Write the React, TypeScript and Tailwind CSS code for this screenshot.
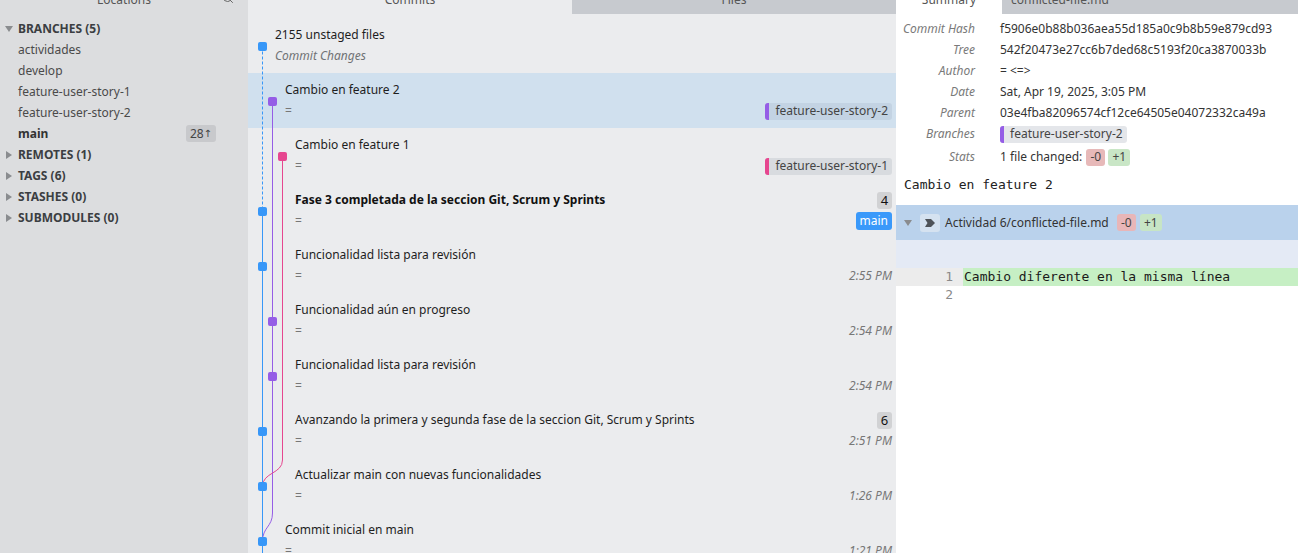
import { Search } from "lucide-react";

const BLUE = "#3797f8";
const PURPLE = "#955de6";
const PINK = "#e6468f";

type Commit = {
  title: string;
  sub?: string;
  italicSub?: boolean;
  pl: string;
  selected?: boolean;
  bold?: boolean;
  badge?: string;
  tag?: { name: string; color: string };
  main?: boolean;
  time?: string;
  first?: boolean;
};

const commits: Commit[] = [
  { title: "2155 unstaged files", sub: "Commit Changes", italicSub: true, pl: "pl-[27px]", first: true },
  { title: "Cambio en feature 2", pl: "pl-[37px]", selected: true, tag: { name: "feature-user-story-2", color: PURPLE } },
  { title: "Cambio en feature 1", pl: "pl-[47px]", tag: { name: "feature-user-story-1", color: PINK } },
  { title: "Fase 3 completada de la seccion Git, Scrum y Sprints", pl: "pl-[47px]", bold: true, badge: "4", main: true },
  { title: "Funcionalidad lista para revisión", pl: "pl-[47px]", time: "2:55 PM" },
  { title: "Funcionalidad aún en progreso", pl: "pl-[47px]", time: "2:54 PM" },
  { title: "Funcionalidad lista para revisión", pl: "pl-[47px]", time: "2:54 PM" },
  { title: "Avanzando la primera y segunda fase de la seccion Git, Scrum y Sprints", pl: "pl-[47px]", badge: "6", time: "2:51 PM" },
  { title: "Actualizar main con nuevas funcionalidades", pl: "pl-[47px]", time: "1:26 PM" },
  { title: "Commit inicial en main", pl: "pl-[37px]", time: "1:21 PM" },
];

const nodes = [
  { x: 14.5, c: BLUE },
  { x: 24.5, c: PURPLE },
  { x: 34.5, c: PINK },
  { x: 14.5, c: BLUE },
  { x: 14.5, c: BLUE },
  { x: 24.5, c: PURPLE },
  { x: 24.5, c: PURPLE },
  { x: 14.5, c: BLUE },
  { x: 14.5, c: BLUE },
  { x: 14.5, c: BLUE },
];

const details = [
  { label: "Commit Hash", value: "f5906e0b88b036aea55d185a0c9b8b59e879cd93" },
  { label: "Tree", value: "542f20473e27cc6b7ded68c5193f20ca3870033b" },
  { label: "Author", value: "= <=>" },
  { label: "Date", value: "Sat, Apr 19, 2025, 3:05 PM" },
  { label: "Parent", value: "03e4fba82096574cf12ce64505e04072332ca49a" },
];

function Caret({ open }: { open?: boolean }) {
  return open ? (
    <svg width="8" height="6" viewBox="0 0 8 6" className="shrink-0">
      <path d="M0 0 H8 L4 6 Z" fill="#8a8c8f" />
    </svg>
  ) : (
    <svg width="6" height="8" viewBox="0 0 6 8" className="shrink-0">
      <path d="M0 0 L6 4 L0 8 Z" fill="#8a8c8f" />
    </svg>
  );
}

function Tag({ name, color, bg }: { name: string; color: string; bg: string }) {
  return (
    <span className={`flex h-[17px] items-center overflow-hidden rounded-[3px] ${bg}`}>
      <span className="h-full w-[4px]" style={{ backgroundColor: color }} />
      <span className="pl-[6px] pr-[4px] text-[12px] leading-none text-[#444]">{name}</span>
    </span>
  );
}

function Graph() {
  return (
    <svg className="pointer-events-none absolute left-0 top-0" width="48" height="545">
      <line x1="14.5" y1="32.5" x2="14.5" y2="197.5" stroke={BLUE} strokeWidth="1" strokeDasharray="3 2" />
      <line x1="14.5" y1="197.5" x2="14.5" y2="545" stroke={BLUE} strokeWidth="1" />
      <path d="M24.5 87.5 V499 C24.5 513, 14.5 513, 14.5 527.5" stroke={PURPLE} strokeWidth="1" fill="none" />
      <path d="M34.5 142.5 V446 C34.5 460, 14.5 458, 14.5 472.5" stroke={PINK} strokeWidth="1" fill="none" />
      {nodes.map((n, i) => (
        <rect key={i} x={n.x - 4.5} y={28 + i * 55} width="9" height="9" rx="2" fill={n.c} />
      ))}
    </svg>
  );
}

export default function App() {
  return (
    <div className="flex h-[553px] w-[1298px] overflow-hidden font-['Noto_Sans',sans-serif] text-[12px] text-[#222]">
      {/* Sidebar */}
      <aside className="flex w-[248px] shrink-0 flex-col bg-[#dcdddf]">
        <div className="relative flex h-[14px] shrink-0 justify-center overflow-hidden">
          <span className="-mt-[10px] leading-[20px] text-[#555]">Locations</span>
          <Search className="absolute right-[14px] -top-[8px]" size={12} strokeWidth={2} color="#666" />
        </div>
        <div className="pt-[4px]">
          <div className="flex h-[21px] items-center gap-[5px] pl-[5px] font-bold text-[#3b3e42]">
            <Caret open />
            <span>BRANCHES (5)</span>
          </div>
          {["actividades", "develop", "feature-user-story-1", "feature-user-story-2"].map((b) => (
            <div key={b} className="flex h-[21px] items-center pl-[18px] text-[#4a4a4a]">
              {b}
            </div>
          ))}
          <div className="flex h-[21px] items-center justify-between pl-[18px] pr-[32px]">
            <span className="font-bold text-[#333]">main</span>
            <span className="flex h-[17px] items-center rounded-[3px] bg-[#c8c9cc] px-[4px] text-[12px] text-[#444]">
              28<span className="font-['DejaVu_Sans',sans-serif] text-[10px]">↑</span>
            </span>
          </div>
          {["REMOTES (1)", "TAGS (6)", "STASHES (0)", "SUBMODULES (0)"].map((h) => (
            <div key={h} className="flex h-[21px] items-center gap-[6px] pl-[6px] font-bold text-[#3b3e42]">
              <Caret />
              <span>{h}</span>
            </div>
          ))}
        </div>
      </aside>

      {/* Commits */}
      <main className="flex w-[648px] shrink-0 flex-col bg-[#ebecee]">
        <div className="flex h-[14px] shrink-0 overflow-hidden">
          <div className="flex w-[324px] justify-center">
            <span className="-mt-[10px] leading-[20px] text-[#555]">Commits</span>
          </div>
          <div className="flex flex-1 justify-center bg-[#c7cacf]">
            <span className="-mt-[10px] leading-[20px] text-[#555]">Files</span>
          </div>
        </div>
        <div className="relative min-h-0 flex-1 overflow-hidden">
          {commits.map((c, i) => (
            <div
              key={i}
              className={`${c.first ? "h-[59px] pt-[12px]" : "h-[55px] pt-[8px]"} ${c.pl} pr-[4px] ${
                c.selected ? "bg-[#d0e0ee]" : ""
              }`}
            >
              <div className="flex h-[18px] items-center justify-between leading-[18px]">
                <span className={c.bold ? "font-bold text-[#111]" : "text-[#1e1e1e]"}>{c.title}</span>
                {c.badge && (
                  <span className="flex h-[17px] w-[15px] items-center justify-center rounded-[3px] bg-[#d1d2d4] text-[13px] text-[#111]">
                    {c.badge}
                  </span>
                )}
              </div>
              <div className="mt-[3px] flex h-[18px] items-center justify-between leading-[18px]">
                <span className={c.italicSub ? "italic text-[#6f7275]" : "text-[#777]"}>
                  {c.sub ?? "="}
                </span>
                {c.tag && (
                  <Tag name={c.tag.name} color={c.tag.color} bg={c.selected ? "bg-[#c3d3e3]" : "bg-[#d8dbdf]"} />
                )}
                {c.main && (
                  <span className="flex h-[18px] items-center rounded-[3px] bg-[#3a99fa] px-[4px] text-[12px] text-white">
                    main
                  </span>
                )}
                {c.time && <span className="italic text-[#777]">{c.time}</span>}
              </div>
            </div>
          ))}
          <Graph />
        </div>
      </main>

      {/* Details */}
      <section className="flex flex-1 flex-col bg-white">
        <div className="flex h-[14px] shrink-0 overflow-hidden">
          <div className="flex w-[106px] justify-center">
            <span className="-mt-[10px] leading-[20px] text-[#555]">Summary</span>
          </div>
          <div className="flex flex-1 bg-[#c7cacf] pl-[9px]">
            <span className="-mt-[10px] leading-[20px] text-[#555]">conflicted-file.md</span>
          </div>
        </div>
        <div className="pt-[4px]">
          {details.map((d) => (
            <div key={d.label} className="flex h-[21px] items-center">
              <span className="w-[79px] text-right italic text-[#7a7a7a]">{d.label}</span>
              <span className="ml-[25px] text-[#333]">{d.value}</span>
            </div>
          ))}
          <div className="flex h-[22px] items-center">
            <span className="w-[79px] text-right italic text-[#7a7a7a]">Branches</span>
            <span className="ml-[25px]">
              <Tag name="feature-user-story-2" color={PURPLE} bg="bg-[#e4e6ea]" />
            </span>
          </div>
          <div className="flex h-[24px] items-center">
            <span className="w-[79px] text-right italic text-[#7a7a7a]">Stats</span>
            <span className="ml-[25px] text-[#333]">1 file changed:</span>
            <span className="ml-[4px] flex h-[17px] w-[19px] items-center justify-center rounded-[3px] bg-[#e7b9b9] text-[#444]">
              -0
            </span>
            <span className="ml-[3px] flex h-[17px] w-[22px] items-center justify-center rounded-[3px] bg-[#c9e6c6] text-[#444]">
              +1
            </span>
          </div>
          <div className="mt-[6px] pl-[8px] font-['DejaVu_Sans_Mono',monospace] text-[13px] leading-[20px] text-[#222]">
            Cambio en feature 2
          </div>
          <div className="mt-[10px] flex h-[35px] items-center bg-[#bad2ec]">
            <span className="ml-[8px]">
              <Caret open />
            </span>
            <span className="ml-[8px] flex h-[18px] w-[20px] items-center justify-center rounded-[3px] bg-[#d5e2f0]">
              <svg width="20" height="18" viewBox="0 0 20 18">
                <path d="M5 5 H11 L15 9 L11 13 H5 L7.5 9 Z" fill="#4f5358" />
              </svg>
            </span>
            <span className="ml-[5px] text-[#333]">Actividad 6/conflicted-file.md</span>
            <span className="ml-[8px] flex h-[17px] w-[19px] items-center justify-center rounded-[3px] bg-[#e8b6b8] text-[#444]">
              -0
            </span>
            <span className="ml-[4px] flex h-[17px] w-[22px] items-center justify-center rounded-[3px] bg-[#c7e5c5] text-[#444]">
              +1
            </span>
          </div>
          <div className="h-[28px] bg-[#e4eaf5]" />
          <div className="flex h-[18px] font-['DejaVu_Sans_Mono',monospace] text-[13px] leading-[18px]">
            <span className="w-[67px] bg-[#ececec] pr-[10px] text-right text-[#8a8a8a]">1</span>
            <span className="flex-1 bg-[#c6efc4] pl-[1px] text-[#1a1a1a]">Cambio diferente en la misma línea</span>
          </div>
          <div className="flex h-[17px] font-['DejaVu_Sans_Mono',monospace] text-[13px] leading-[17px]">
            <span className="w-[67px] pr-[10px] text-right text-[#8a8a8a]">2</span>
          </div>
        </div>
      </section>
    </div>
  );
}
